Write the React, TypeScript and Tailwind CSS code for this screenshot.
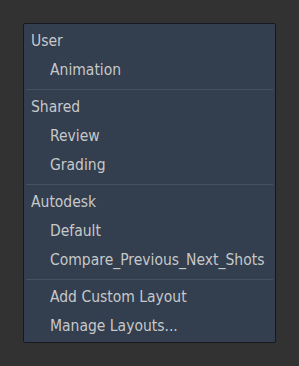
const groups = [
    { title: "User", items: ["Animation"] },
    { title: "Shared", items: ["Review", "Grading"] },
    { title: "Autodesk", items: ["Default", "Compare_Previous_Next_Shots"] },
    { title: null, items: ["Add Custom Layout", "Manage Layouts..."] },
];

export default function App() {
    return (
        <div
            className="w-[299px] h-[366px] bg-[#323232] pt-[23px] pl-[23px]"
            style={{ fontFamily: '"DejaVu Sans Condensed", "DejaVu Sans", sans-serif' }}
        >
            <div className="w-[253px] rounded-[2px] border border-[#151a20] bg-[#333e4e] pt-[3px] pb-[1px] text-[15.5px] text-[#c6c8ca]">
                {groups.map((group, i) => (
                    <div key={i}>
                        {i > 0 && (
                            <div className="flex h-[8px] items-center px-[2px]">
                                <div className="h-px w-full bg-[#46505e]" />
                            </div>
                        )}
                        {group.title && (
                            <div className="flex h-[29px] items-center pl-[7px]">{group.title}</div>
                        )}
                        {group.items.map(item => (
                            <div key={item} className="flex h-[29px] items-center pl-[26px] whitespace-nowrap">
                                {item}
                            </div>
                        ))}
                    </div>
                ))}
            </div>
        </div>
    );
}
